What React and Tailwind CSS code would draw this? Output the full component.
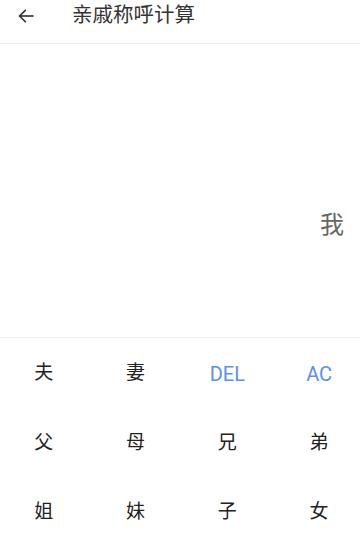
import React from "react";

const keys = [
  ["夫", false], ["妻", false], ["DEL", true], ["AC", true],
  ["父", false], ["母", false], ["兄", false], ["弟", false],
  ["姐", false], ["妹", false], ["子", false], ["女", false],
];

export default function App() {
  return (
    <div
      className="w-[360px] h-[547px] bg-white flex flex-col overflow-hidden"
      style={{ fontFamily: 'Roboto, "Noto Sans CJK SC", sans-serif' }}
    >
      <div className="h-[44px] shrink-0 flex items-start border-b border-[#efefef]">
        <div className="h-[31px] flex items-center">
          <svg className="ml-[17px]" width="18" height="18" viewBox="0 0 24 24" fill="none" stroke="#333" strokeWidth="2.2" strokeLinecap="square">
            <path d="M21 12H4" />
            <path d="M11 4.5L3.5 12L11 19.5" />
          </svg>
          <span className="ml-[37px] text-[20.5px] text-[#333] leading-none">亲戚称呼计算</span>
        </div>
      </div>
      <div className="flex-1 flex items-start justify-end pt-[169px] pr-[16px] border-b border-[#efefef]">
        <span className="text-[24px] text-[#666] leading-none">我</span>
      </div>
      <div className="h-[209px] shrink-0 overflow-hidden">
        <div className="w-[367px] ml-[-2px] h-full pt-[1px] grid grid-cols-4 grid-rows-3">
          {keys.map(([k, blue]) => (
            <div key={k} className="flex items-center justify-center">
              <span className={blue ? "text-[20px] text-[#5b8ff2]" : "text-[19px] text-[#222]"}>{k}</span>
            </div>
          ))}
        </div>
      </div>
    </div>
  );
}
